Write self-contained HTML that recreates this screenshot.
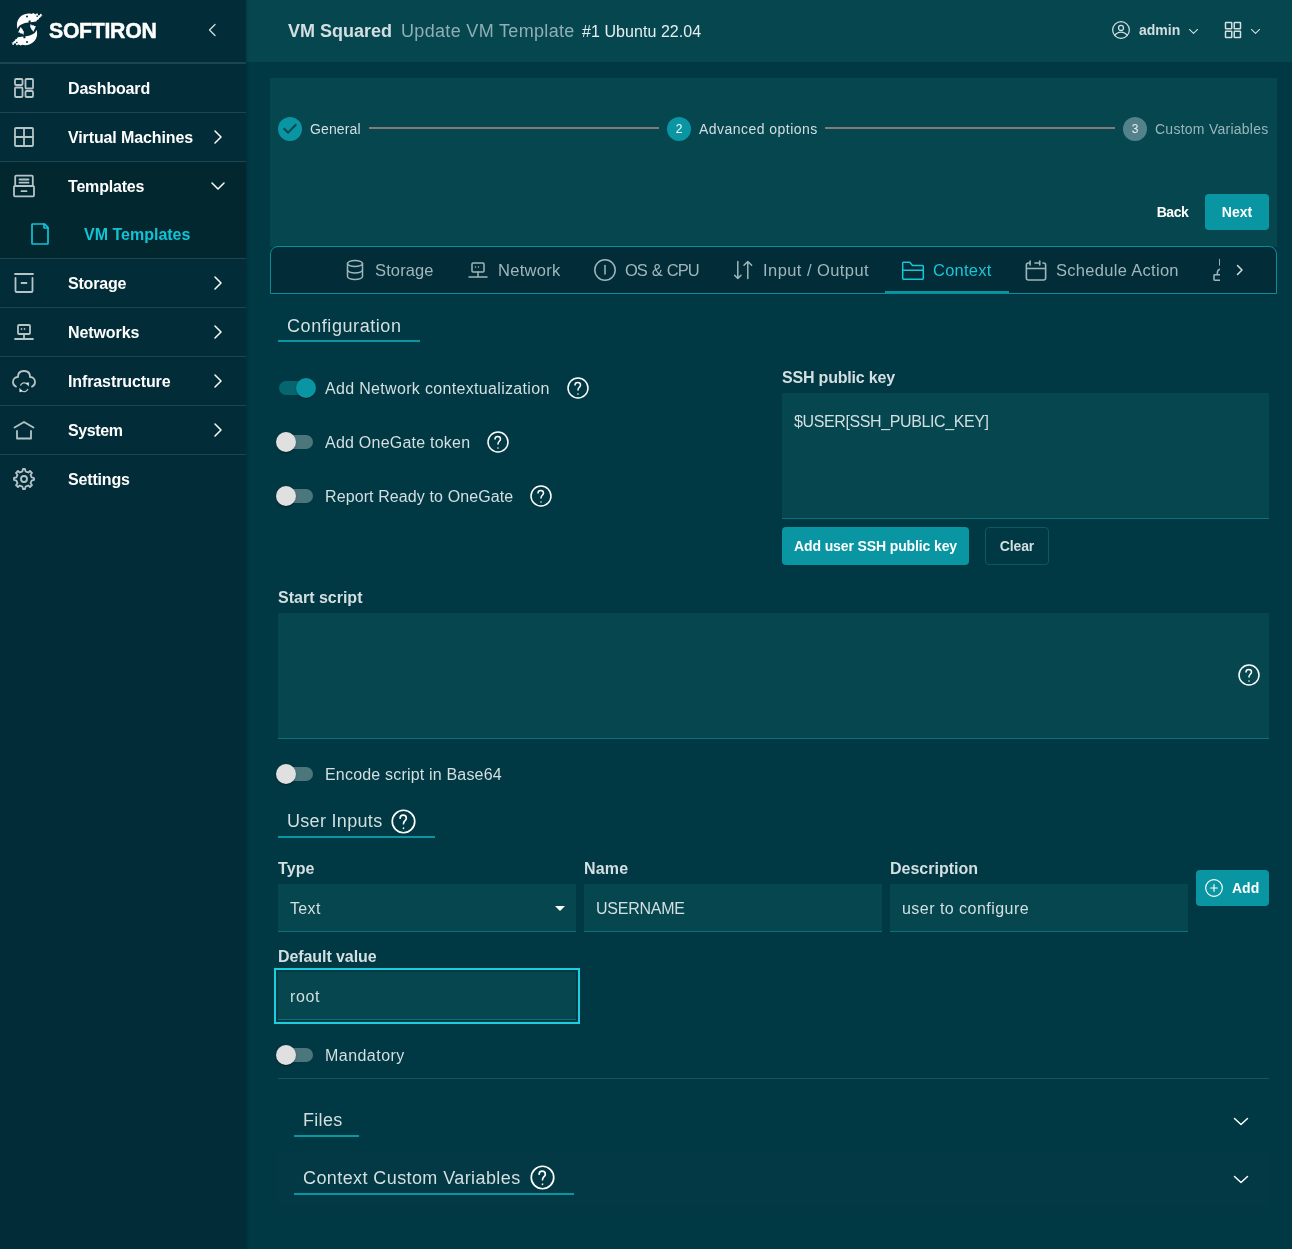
<!DOCTYPE html>
<html lang="en">
<head>
<meta charset="utf-8">
<title>VM Squared - Update VM Template</title>
<style>
*{box-sizing:border-box;margin:0;padding:0}
html,body{width:1292px;height:1249px;overflow:hidden}
body{will-change:transform;background:#003843;font-family:"Liberation Sans",sans-serif;color:#d3dfe1;position:relative;font-size:16px}
.abs{position:absolute}
svg{display:block;overflow:visible}
.ic{fill:none;stroke:currentColor;stroke-width:1.5;stroke-linecap:round;stroke-linejoin:round}
/* sidebar */
#sidebar{position:absolute;left:0;top:0;width:246px;height:1249px;background:#022c37}
#sidebar .div{position:absolute;left:0;width:246px;height:1px;background:#1c464f}
#sidebar .open{position:absolute;left:0;top:162px;width:246px;height:96px;background:#03272f}
.nav{position:absolute;left:0;width:246px;height:48px}
.nav .i{position:absolute;left:12px;top:12px;width:24px;height:24px;color:#b5c4c7}
.nav .i .ic{stroke-width:1.800}
.nav .t{position:absolute;left:68px;top:0;line-height:48px;font-weight:bold;font-size:16px;color:#fff;white-space:nowrap}
.nav .c{position:absolute;left:206px;top:12px;width:24px;height:24px;color:#fff}
.nav.sub .i{left:28px;color:#12c3d6}
.nav.sub .t{left:84px;color:#12c3d6}
/* header */
#header{position:absolute;left:246px;top:0;width:1046px;height:62px;background:#06464f}
#shadow{position:absolute;left:246px;top:0;width:3px;height:1249px;background:linear-gradient(90deg,rgba(0,0,0,.14),rgba(0,0,0,0))}
.t{white-space:nowrap}
/* panel */
#panel{position:absolute;left:270px;top:78px;width:1007px;height:169px;background:#06464f}
.stepc{position:absolute;width:24px;height:24px;border-radius:50%;background:#0995a2;color:#fff;font-size:12px;line-height:24px;text-align:center}
.stepl{position:absolute;font-size:14px;line-height:20px;color:#d3dfe1;white-space:nowrap}
.conn{position:absolute;height:2px;background:#857979}
.btn{position:absolute;border-radius:4px;background:#0995a2;color:#fff;font-weight:bold;font-size:14px;white-space:nowrap}
/* tabs */
#tabs{position:absolute;left:270px;top:246px;width:1007px;height:48px;background:#022c37;border:1px solid #0a8d9a;border-radius:8px 8px 0 0}
.tab{position:absolute;top:0;height:46px;color:#9fb7bb;font-size:16.5px;white-space:nowrap}
.tab .i{position:absolute;top:11px;width:24px;height:24px}
.tab .t{position:absolute;top:0;line-height:47px}
/* form */
.legend{position:absolute;font-size:18px;line-height:24px;color:#d3dfe1;white-space:nowrap;border-bottom:2px solid #0995a2}
.lbl{position:absolute;font-size:16px;line-height:20px;color:#d3dfe1;white-space:nowrap}
.blbl{position:absolute;font-size:16px;line-height:20px;font-weight:bold;color:#d3dfe1;white-space:nowrap}
.box{position:absolute;background:#06464f;border-bottom:1px solid #0a707b}
.box .v{position:absolute;left:12px;font-size:16px;line-height:20px;color:#d3dfe1;white-space:nowrap}
.sw{position:absolute;width:58px;height:38px}
.sw .tr{position:absolute;left:12px;top:12px;width:34px;height:14px;border-radius:7px;background:#4b767c}
.sw .th{position:absolute;left:9px;top:9px;width:20px;height:20px;border-radius:50%;background:#e0e0e0;box-shadow:0 2px 1px -1px rgba(0,0,0,.2),0 1px 1px 0 rgba(0,0,0,.14),0 1px 3px 0 rgba(0,0,0,.12)}
.sw.on .tr{background:#05666f}
.sw.on .th{left:29px;background:#0995a2}
.help{position:absolute;width:24px;height:24px;color:#fff}
/*fit*/
#n1{letter-spacing:-0.175px}
#n2{letter-spacing:-0.120px}
#n3{letter-spacing:-0.190px}
#n5{letter-spacing:-0.200px}
#n6{letter-spacing:-0.090px}
#n7{letter-spacing:-0.110px}
#n8{letter-spacing:-0.400px}
#n9{letter-spacing:-0.160px}
#h2{letter-spacing:0.330px}
#h3{letter-spacing:0.060px}
#s1{letter-spacing:0.120px}
#s2{letter-spacing:0.467px}
#s3{letter-spacing:0.253px}
#bback{letter-spacing:-0.430px}
#t1{letter-spacing:0.120px}
#t2{letter-spacing:0.300px}
#t3{letter-spacing:-1px;word-spacing:1.400px}
#t4{letter-spacing:0.438px}
#t5{letter-spacing:0.250px}
#t6{letter-spacing:0.300px}
#l1{letter-spacing:0.575px}
#f1{letter-spacing:0.325px}
#f2{letter-spacing:0.231px}
#f3{letter-spacing:0.105px}
#f4{letter-spacing:-0.190px}
#f5{letter-spacing:-0.385px}
#badd{letter-spacing:-0.120px}
#bclear{letter-spacing:-0.120px}
#f7{letter-spacing:0.186px}
#l2{letter-spacing:0.310px}
#f8{letter-spacing:0.100px}
#f9{letter-spacing:0.330px}
#f10{letter-spacing:0.200px}
#f11{letter-spacing:-0.257px}
#f13{letter-spacing:0.462px}
#f14{letter-spacing:-0.083px}
#f15{letter-spacing:0.600px}
#f16{letter-spacing:0.462px}
#l3{letter-spacing:0.300px}
#l4{letter-spacing:0.409px}
.nav .t{top:1px}
.lbl,.blbl{margin-top:1px}
.box .v{margin-top:1px}
#brand{letter-spacing:0;margin-top:1px;-webkit-text-stroke:.500px #fff;transform:scaleX(.944);transform-origin:0 50%}
/*endfit*/
</style>
</head>
<body>
<svg width="0" height="0" style="position:absolute">
<defs>
<symbol id="help" viewBox="0 0 24 24"><g class="ic"><circle cx="12" cy="12" r="10"/><path d="M9 9c0-3.500 5.500-3.500 5.500 0c0 2.500-2.500 2-2.500 5"/><path d="M12 18.010l.010-.011"/></g></symbol>
<symbol id="chev-r" viewBox="0 0 24 24"><path class="ic" d="M9 6l6 6-6 6"/></symbol>
<symbol id="chev-d" viewBox="0 0 24 24"><path class="ic" d="M6 9l6 6 6-6"/></symbol>
<symbol id="chev-l" viewBox="0 0 24 24"><path class="ic" style="stroke-width:1.300" d="M15 6.500l-5.500 5.500 5.500 5.500"/></symbol>
</defs>
</svg>

<div id="sidebar">
  <!-- logo -->
  <svg class="abs" style="left:6px;top:8px" width="42" height="42" viewBox="0 0 42 42" fill="#fff">
    <g id="sw">
      <path d="M34.500 6.600L32.800 7.800L31.200 5.900L29.200 6.300L27.500 5.100L25.500 5.900C20 4.300 11 8 10.900 17C10.900 18.500 11 19.800 11.500 21C12.500 17.500 16 15.300 22.600 14.500L22.600 12.400L24.600 12.400L24.600 14.200L30.300 13.500L31 11.900L32.600 11.500L33.200 9.900L34.600 9.300L35 7.700Z"/>
      <rect x="30.300" y="5.500" width="1.500" height="1.500"/><rect x="34" y="5.900" width="1.600" height="1.600"/><rect x="32.500" y="7.600" width="1.500" height="1.500"/><rect x="35.200" y="7.300" width="1" height="1"/>
      <circle cx="21" cy="8.600" r="1" fill="#022c37"/>
      <rect x="30.500" y="7.500" width="1.400" height="1.400" fill="#022c37"/>
      <path d="M12.100 24.500L14.800 18.800L15.600 20.400L16.600 21.200L17 22.800L17.900 23.600L17.400 26.900L16 25.200L14.800 25.800L13.800 24.600Z"/>
    </g>
    <use href="#sw" transform="rotate(180 21 21.350)"/>
  </svg>
  <div class="abs t" id="brand" style="left:49px;top:14px;font-size:22.500px;line-height:32px;font-weight:bold;color:#fff;letter-spacing:-.300px">SOFTIRON</div>
  <svg class="abs" style="left:200px;top:18px;color:#d3dfe1" width="24" height="24"><use href="#chev-l"/></svg>
  <div class="div" style="top:62px;height:2px"></div>
  <div class="open"></div>

  <div class="nav" style="top:64px"><svg class="i" viewBox="0 0 24 24"><g class="ic"><rect x="3" y="3" width="7.500" height="6" rx="1"/><rect x="3" y="11.500" width="7.500" height="9.500" rx="1"/><rect x="13.500" y="3" width="7.500" height="9.500" rx="1"/><rect x="13.500" y="15" width="7.500" height="6" rx="1"/></g></svg><span class="t" id="n1">Dashboard</span></div>
  <div class="div" style="top:112px"></div>
  <div class="nav" style="top:113px"><svg class="i" viewBox="0 0 24 24"><g class="ic"><rect x="3" y="3" width="18" height="18" rx="1"/><path d="M12 3v18M3 12h18"/></g></svg><span class="t" id="n2">Virtual Machines</span><svg class="c"><use href="#chev-r"/></svg></div>
  <div class="div" style="top:161px"></div>
  <div class="nav" style="top:162px"><svg class="i" viewBox="0 0 24 24"><g class="ic"><rect x="3.200" y="1.700" width="17.600" height="10.300" rx="1"/><rect x="2" y="12" width="20" height="10.300" rx="1"/><path d="M7.500 5.500h9M7.500 8.700h9M9.500 17.200h5"/></g></svg><span class="t" id="n3">Templates</span><svg class="c"><use href="#chev-d"/></svg></div>
  <div class="nav sub" style="top:210px"><svg class="i" viewBox="0 0 24 24"><g class="ic" style="stroke-width:1.700"><path d="M4 21.400V2.600a.600.600 0 0 1 .600-.600h11.652a.600.600 0 0 1 .424.176l3.148 3.148A.600.600 0 0 1 20 5.749V21.400a.600.600 0 0 1-.600.600H4.600a.600.600 0 0 1-.600-.600z"/><path d="M16 2v3.400a.600.600 0 0 0 .600.600H20"/></g></svg><span class="t" id="n4">VM Templates</span></div>
  <div class="div" style="top:258px"></div>
  <div class="nav" style="top:259px"><svg class="i" viewBox="0 0 24 24"><g class="ic"><path d="M3 3h18"/><path d="M3.500 7v13a1 1 0 0 0 1 1h15a1 1 0 0 0 1-1V7"/><path d="M9.500 12h5"/></g></svg><span class="t" id="n5">Storage</span><svg class="c"><use href="#chev-r"/></svg></div>
  <div class="div" style="top:307px"></div>
  <div class="nav" style="top:308px"><svg class="i" viewBox="0 0 24 24"><g class="ic"><rect x="6" y="5" width="12" height="9" rx="1"/><path d="M12 14v5M3 19h18"/><path d="M9.500 9.010l.010-.011M12.500 9.010l.010-.011"/></g></svg><span class="t" id="n6">Networks</span><svg class="c"><use href="#chev-r"/></svg></div>
  <div class="div" style="top:356px"></div>
  <div class="nav" style="top:357px"><svg class="i" viewBox="0 0 24 24"><g class="ic"><path d="M20 17.607c1.494-.585 3-1.918 3-4.607 0-4-3.333-5-5-5 0-2 0-6-6-6S6 6 6 8c-1.667 0-5 1-5 5 0 2.689 1.506 4.022 3 4.607"/><path d="M8.600 16.200A4 4 0 0 1 15 14.900M15.800 20.300A4 4 0 0 1 9.400 21.600" style="stroke-width:1.200"/><path d="M14 14.200l2.700-.700.100 3.400zM10.400 22.300l-2.700.700-.100-3.400z" fill="#fff" style="stroke-width:.400"/></g></svg><span class="t" id="n7">Infrastructure</span><svg class="c"><use href="#chev-r"/></svg></div>
  <div class="div" style="top:405px"></div>
  <div class="nav" style="top:406px"><svg class="i" viewBox="0 0 24 24"><g class="ic"><path d="M2.500 9.500L12 4l9.500 5.500"/><path d="M5 13v7.500h14V13"/></g></svg><span class="t" id="n8">System</span><svg class="c"><use href="#chev-r"/></svg></div>
  <div class="div" style="top:454px"></div>
  <div class="nav" style="top:455px"><svg class="i" viewBox="0 0 24 24"><g class="ic"><circle cx="12" cy="12" r="3"/><path d="M19.622 10.395l-1.097-2.650L20 6l-2-2-1.735 1.483-2.707-1.113L12.935 2h-1.954l-.632 2.401-2.645 1.115L6 4 4 6l1.453 1.789-1.080 2.657L2 11v2l2.401.655L5.516 16.300 4 18l2 2 1.791-1.460 2.606 1.072L11 22h2l.604-2.387 2.651-1.098C16.697 18.831 18 20 18 20l2-2-1.484-1.750 1.098-2.652 2.386-.620V11l-2.378-.605z"/></g></svg><span class="t" id="n9">Settings</span></div>
</div>

<div id="header">
  <div class="abs t" id="h1" style="left:42px;top:19px;font-size:18px;line-height:24px;font-weight:bold;color:#d3dfe1">VM Squared</div>
  <div class="abs t" id="h2" style="left:155px;top:19px;font-size:18px;line-height:24px;color:#8fafb4">Update VM Template</div>
  <div class="abs t" id="h3" style="left:336px;top:20px;font-size:16px;line-height:24px;color:#e6eef0">#1 Ubuntu 22.04</div>
  <svg class="abs" style="left:865px;top:20px;color:#d3dfe1" width="20" height="20" viewBox="0 0 24 24"><g class="ic"><circle cx="12" cy="12" r="10"/><circle cx="12" cy="9.500" r="3"/><path d="M4.500 18.500c2-3 4.500-4 7.500-4s5.500 1 7.500 4"/></g></svg>
  <div class="abs t" id="h4" style="left:893px;top:20px;font-size:14px;line-height:20px;font-weight:bold;color:#d3dfe1">admin</div>
  <svg class="abs" style="left:942.500px;top:29px;color:#d3dfe1" width="9" height="5.400" viewBox="0 0 10 6"><path d="M.500.500L5 5 9.500.500" fill="none" stroke="currentColor" stroke-width="1.200" stroke-linecap="round" stroke-linejoin="round"/></svg>
  <svg class="abs" style="left:977px;top:20px;color:#d3dfe1" width="20" height="20" viewBox="0 0 24 24"><g class="ic" style="stroke-width:1.800"><rect x="3" y="3" width="7.500" height="7.500" rx=".600"/><rect x="13.500" y="3" width="7.500" height="7.500" rx=".600"/><rect x="3" y="13.500" width="7.500" height="7.500" rx=".600"/><rect x="13.500" y="13.500" width="7.500" height="7.500" rx=".600"/></g></svg>
  <svg class="abs" style="left:1004.800px;top:29px;color:#d3dfe1" width="9" height="5.400" viewBox="0 0 10 6"><path d="M.500.500L5 5 9.500.500" fill="none" stroke="currentColor" stroke-width="1.200" stroke-linecap="round" stroke-linejoin="round"/></svg>
</div>
<div id="shadow"></div>
<div id="panel">
  <div class="stepc" style="left:8px;top:39px"><svg width="24" height="24" viewBox="0 0 24 24"><path d="M5.700 11.300L10 15.600l8.300-8.300" fill="none" stroke="#06464f" stroke-width="2"/></svg></div>
  <div class="stepl" id="s1" style="left:40px;top:41px">General</div>
  <div class="conn" style="left:99px;top:49px;width:290px"></div>
  <div class="stepc" style="left:397px;top:39px">2</div>
  <div class="stepl" id="s2" style="left:429px;top:41px">Advanced options</div>
  <div class="conn" style="left:555px;top:49px;width:290px"></div>
  <div class="stepc" style="left:853px;top:39px;background:#54828a;color:#e6eef0">3</div>
  <div class="stepl" id="s3" style="left:885px;top:41px;color:#9ab6ba">Custom Variables</div>
  <div class="btn" id="bback" style="left:870px;top:116px;width:65px;height:36px;line-height:36px;background:none;text-align:center">Back</div>
  <div class="btn" id="bnext" style="left:935px;top:116px;width:64px;height:36px;line-height:36px;text-align:center">Next</div>
</div>

<div id="tabs">
  <div class="tab" style="left:56px"><svg class="i" style="left:16px" viewBox="0 0 24 24"><g class="ic"><ellipse cx="12" cy="5.500" rx="7.500" ry="3"/><path d="M4.500 5.500v13c0 1.660 3.360 3 7.500 3s7.500-1.340 7.500-3v-13"/><path d="M4.500 12c0 1.660 3.360 3 7.500 3s7.500-1.340 7.500-3"/></g></svg><span class="t" id="t1" style="left:48px">Storage</span></div>
  <div class="tab" style="left:178px"><svg class="i" style="left:17px" viewBox="0 0 24 24"><g class="ic"><rect x="6" y="5" width="12" height="9" rx="1"/><path d="M12 14v5M3 19h18"/><path d="M9.500 9.010l.010-.011M12.500 9.010l.010-.011"/></g></svg><span class="t" id="t2" style="left:49px">Network</span></div>
  <div class="tab" style="left:306px"><svg class="i" style="left:16px" viewBox="0 0 24 24"><g class="ic"><circle cx="12" cy="12" r="10.200"/><path d="M12 7.500v8.500"/></g></svg><span class="t" id="t3" style="left:48px">OS &amp; CPU</span></div>
  <div class="tab" style="left:443px"><svg class="i" style="left:16px" viewBox="0 0 24 24"><g class="ic"><path d="M7.800 3.500v17M4.600 17.300L7.800 20.500l3.200-3.200"/><path d="M17.800 20.500v-17M14 7.300L17.800 3.500l3.800 3.800"/></g></svg><span class="t" id="t4" style="left:49px">Input / Output</span></div>
  <div class="tab" style="left:614px;color:#18c6d8"><svg class="i" style="left:16px" viewBox="0 0 24 24"><g class="ic"><path d="M1.700 12.200h20.600M1.700 12.200V5a.800.800 0 0 1 .800-.800h6.300l2.700 3.300h10a.800.800 0 0 1 .800.800V20.500a.800.800 0 0 1-.800.800H2.500a.800.800 0 0 1-.800-.800z"/></g></svg><span class="t" id="t5" style="left:48px">Context</span></div>
  <div class="abs" style="left:614px;top:44px;width:124px;height:2px;background:#0995a2"></div>
  <div class="tab" style="left:737px"><svg class="i" style="left:16px" viewBox="0 0 24 24"><g class="ic"><g transform="translate(12 13) scale(1.070 1) translate(-12 -12)"><path d="M15.500 4V2M15.500 4v2M15.500 4h-4.500M3 9.500v9.500a2 2 0 0 0 2 2h14a2 2 0 0 0 2-2V9.500H3zM3 9.500V6a2 2 0 0 1 2-2h1.500M6.500 2v4M21 9.500V6a2 2 0 0 0-2-2h-.500"/></g></g></svg><span class="t" id="t6" style="left:48px">Schedule Action</span></div>
  <div class="abs" style="left:939px;top:0;width:10px;height:46px;overflow:hidden;color:#9fb7bb"><svg class="abs" style="left:0;top:10px" width="24" height="24" viewBox="0 0 24 24"><g class="ic"><path d="M9.800 2.500v5.500"/><path d="M10 12.200Q7.300 12.700 7.300 16.500"/><path d="M10.500 17.700H4.700a.700.700 0 0 0-.700.700v4.100a.700.700 0 0 0 .700.700h5.800"/></g></svg></div>
  <svg class="abs" style="left:957px;top:11px;color:#d3dfe1" width="24" height="24" viewBox="0 0 24 24"><path class="ic" d="M9.500 7.500l4.500 4.500-4.500 4.500"/></svg>
</div>

<div class="legend" id="l1" style="left:278px;top:314px;padding:0 18px 2px 9px">Configuration</div>

<div class="sw on" style="left:267px;top:369px"><div class="tr"></div><div class="th"></div></div>
<div class="lbl" id="f1" style="left:325px;top:378px">Add Network contextualization</div>
<svg class="help" style="left:566px;top:376px"><use href="#help"/></svg>
<div class="sw" style="left:267px;top:423px"><div class="tr"></div><div class="th"></div></div>
<div class="lbl" id="f2" style="left:325px;top:432px">Add OneGate token</div>
<svg class="help" style="left:486px;top:430px"><use href="#help"/></svg>
<div class="sw" style="left:267px;top:477px"><div class="tr"></div><div class="th"></div></div>
<div class="lbl" id="f3" style="left:325px;top:486px">Report Ready to OneGate</div>
<svg class="help" style="left:529px;top:484px"><use href="#help"/></svg>

<div class="blbl" id="f4" style="left:782px;top:367px">SSH public key</div>
<div class="box" style="left:782px;top:393px;width:487px;height:126px"><span class="v" id="f5" style="top:18px">$USER[SSH_PUBLIC_KEY]</span></div>
<div class="btn" id="badd" style="left:782px;top:527px;width:187px;height:38px;line-height:38px;text-align:center">Add user SSH public key</div>
<div class="btn" id="bclear" style="left:985px;top:527px;width:64px;height:38px;line-height:36px;text-align:center;background:none;border:1px solid #0a5a65;color:#d3dfe1">Clear</div>

<div class="blbl" id="f6" style="left:278px;top:587px">Start script</div>
<div class="box" style="left:278px;top:613px;width:991px;height:126px"></div>
<svg class="help" style="left:1237px;top:663px"><use href="#help"/></svg>

<div class="sw" style="left:267px;top:755px"><div class="tr"></div><div class="th"></div></div>
<div class="lbl" id="f7" style="left:325px;top:764px">Encode script in Base64</div>

<div class="legend" id="l2" style="left:278px;top:809px;padding:0 53px 3px 9px">User Inputs</div>
<svg class="help" style="left:390px;top:807.500px;width:27px;height:27px"><use href="#help"/></svg>

<div class="blbl" id="f8" style="left:278px;top:858px">Type</div>
<div class="box" style="left:278px;top:884px;width:298px;height:48px"><span class="v" id="f9" style="top:14px">Text</span>
<svg class="abs" style="left:277px;top:22px" width="10" height="5" viewBox="0 0 10 5"><path d="M0 0h10L5 5z" fill="#fff"/></svg></div>
<div class="blbl" id="f10" style="left:584px;top:858px">Name</div>
<div class="box" style="left:584px;top:884px;width:298px;height:48px"><span class="v" id="f11" style="top:14px">USERNAME</span></div>
<div class="blbl" id="f12" style="left:890px;top:858px">Description</div>
<div class="box" style="left:890px;top:884px;width:298px;height:48px"><span class="v" id="f13" style="top:14px">user to configure</span></div>
<div class="btn" style="left:1196px;top:870px;width:73px;height:36px;line-height:36px"><svg class="abs" style="left:8px;top:8px" width="20" height="20" viewBox="0 0 24 24"><g class="ic" style="stroke-width:1.400"><circle cx="12" cy="12" r="10"/><path d="M8 12h8M12 8v8"/></g></svg><span class="abs" id="badd2" style="left:36px;top:0">Add</span></div>

<div class="blbl" id="f14" style="left:278px;top:946px">Default value</div>
<div class="box" style="left:278px;top:972px;width:298px;height:48px;outline:2px solid #1ccfe0;outline-offset:2px"><span class="v" id="f15" style="top:14px">root</span></div>

<div class="sw" style="left:267px;top:1036px"><div class="tr"></div><div class="th"></div></div>
<div class="lbl" id="f16" style="left:325px;top:1045px">Mandatory</div>
<div class="abs" style="left:278px;top:1078px;width:991px;height:1px;background:#1b525c"></div>

<div class="legend" id="l3" style="left:294px;top:1108px;padding:0 16px 3px 9px">Files</div>
<svg class="abs" style="left:1229px;top:1109px;color:#fff" width="24" height="24" viewBox="0 0 24 24"><path class="ic" d="M5.500 9.500l6.500 6 6.500-6"/></svg>
<div class="abs" style="left:278px;top:1153px;width:991px;height:53px;background:rgba(255,255,255,.008)"></div>
<div class="legend" id="l4" style="left:294px;top:1166px;padding:0 53px 3px 9px">Context Custom Variables</div>
<svg class="help" style="left:529px;top:1164px;width:27px;height:27px"><use href="#help"/></svg>
<svg class="abs" style="left:1229px;top:1167px;color:#fff" width="24" height="24" viewBox="0 0 24 24"><path class="ic" d="M5.500 9.500l6.500 6 6.500-6"/></svg>

</body>
</html>
